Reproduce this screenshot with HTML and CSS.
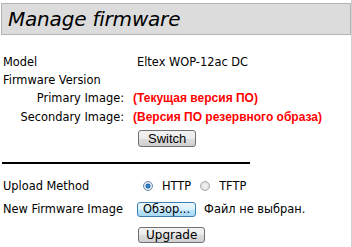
FILE: index.html
```html
<!DOCTYPE html>
<html lang="ru">
<head>
    <meta charset="UTF-8">
    <meta name="viewport" content="width=device-width, initial-scale=1.0">
    <title>Manage firmware</title>
    <link rel="stylesheet" href="styles.css">
</head>
<body>
    <div class="page">
        <div class="header">
            <h1>Manage firmware</h1>
        </div>

        <div class="info">
            <div class="row">
                <span class="label">Model</span>
                <span class="value">Eltex WOP-12ac DC</span>
            </div>
            <div class="row">
                <span class="label">Firmware Version</span>
            </div>
            <div class="row image-row">
                <span class="image-label">Primary Image:</span>
                <span class="version">(Текущая версия ПО)</span>
            </div>
            <div class="row image-row">
                <span class="image-label">Secondary Image:</span>
                <span class="version">(Версия ПО резервного образа)</span>
            </div>
            <div class="button-row">
                <button class="btn">Switch</button>
            </div>
        </div>

        <hr class="divider">

        <div class="upload">
            <div class="row upload-row">
                <span class="label">Upload Method</span>
                <div class="value radios">
                    <label class="radio"><input type="radio" name="method" checked> HTTP</label>
                    <label class="radio"><input type="radio" name="method"> TFTP</label>
                </div>
            </div>
            <div class="row file-row">
                <span class="label">New Firmware Image</span>
                <div class="value file">
                    <button class="btn btn-browse">Обзор...</button>
                    <span class="file-name">Файл не выбран.</span>
                </div>
            </div>
            <div class="button-row">
                <button class="btn btn-upgrade">Upgrade</button>
            </div>
        </div>
    </div>
</body>
</html>
```

FILE: styles.css
```css
body {
    margin: 0;
    font-family: "DejaVu Sans", Verdana, sans-serif;
    font-size: 11.4px;
    color: #000;
    background: #fff;
}
.page {
    width: 352px;
    height: 247px;
    padding-top: 3px;
    box-sizing: border-box;
    border-right: 1px solid #d0d0d0;
}
.header {
    margin-left: 1px;
    width: 350px;
    height: 32px;
    box-sizing: border-box;
    background: #dcdcdc;
    border: 1px solid #b4b4b4;
    display: flex;
    align-items: center;
}
.header h1 {
    margin: 0 0 0 6px;
    font-size: 20px;
    font-weight: normal;
    font-style: italic;
    letter-spacing: -0.2px;
}
.info {
    padding-top: 18px;
}
.row {
    display: flex;
    align-items: center;
    height: 18px;
    padding-left: 3px;
}
.label {
    width: 134px;
    flex: none;
}
.image-row {
    padding-left: 0;
    height: 18.5px;
}
.image-label {
    width: 124px;
    text-align: right;
    flex: none;
}
.version {
    margin-left: 9px;
    color: #ff0000;
    font-family: "Liberation Sans", Arial, sans-serif;
    font-weight: bold;
    font-size: 12px;
}
.button-row {
    padding-left: 138px;
    padding-top: 4px;
}
.btn {
    font-family: "Liberation Sans", Arial, sans-serif;
    font-size: 13px;
    height: 17px;
    padding: 0 9px;
    border: 1px solid #707070;
    border-radius: 3px;
    background: linear-gradient(to bottom, #f2f2f2 0%, #ebebeb 50%, #dddddd 51%, #cfcfcf 100%);
    color: #000;
    line-height: 15px;
}
.divider {
    margin: 15px 0 0 2px;
    width: 248px;
    height: 2px;
    border: none;
    background: #000;
}
.upload {
    padding-top: 13px;
}
.radios {
    display: flex;
    align-items: center;
    gap: 9px;
    margin-left: 6px;
}
.radio {
    display: flex;
    align-items: center;
    gap: 9px;
}
.radio input {
    appearance: none;
    margin: 0;
    width: 10px;
    height: 10px;
    border-radius: 50%;
    border: 1px solid #a8a8a8;
    background: radial-gradient(circle, #f4f4f4 0%, #d8d8d8 100%);
    box-sizing: border-box;
}
.radio input:checked {
    border-color: #6b8aa8;
    background: radial-gradient(circle, #3d9ae8 0%, #1d5f9e 40%, #e8eef4 48%, #cfd8e0 100%);
}
.file-row {
    height: 20px;
    margin-top: 4px;
}
.file {
    display: flex;
    align-items: center;
    gap: 8px;
}
.btn-browse {
    height: 15px;
    line-height: 13px;
    padding: 0 5px;
    font-family: "DejaVu Sans", Verdana, sans-serif;
    font-size: 11.4px;
    border-color: #3c7fb1;
    background: linear-gradient(to bottom, #eaf6fd 0%, #d9f0fc 50%, #bee6fd 51%, #a7d9f5 100%);
}
.upload .button-row {
    padding-top: 8px;
}
.btn-upgrade {
    font-family: "DejaVu Sans", Verdana, sans-serif;
    font-size: 12px;
    height: 16px;
    line-height: 14px;
    padding: 0 7px;
}
```
